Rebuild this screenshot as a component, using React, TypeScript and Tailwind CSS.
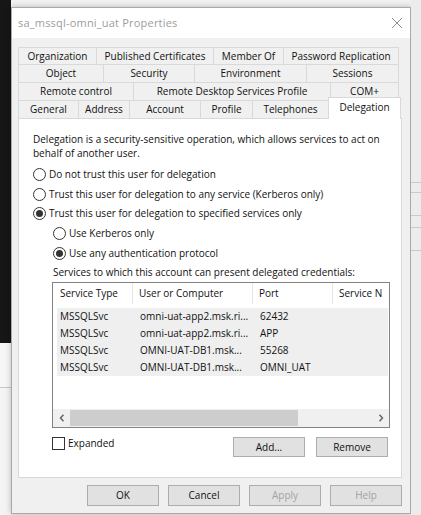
const ui = "font-['Open_Sans','Noto_Sans',sans-serif]";

const tabRows: { label: string; w: number }[][] = [
  [
    { label: "Organization", w: 78 },
    { label: "Published Certificates", w: 117 },
    { label: "Member Of", w: 70 },
    { label: "Password Replication", w: 116 },
  ],
  [
    { label: "Object", w: 85 },
    { label: "Security", w: 91 },
    { label: "Environment", w: 112 },
    { label: "Sessions", w: 93 },
  ],
  [
    { label: "Remote control", w: 115 },
    { label: "Remote Desktop Services Profile", w: 197 },
    { label: "COM+", w: 69 },
  ],
];

const lastRow = [
  { label: "General", w: 60 },
  { label: "Address", w: 51 },
  { label: "Account", w: 71 },
  { label: "Profile", w: 52 },
  { label: "Telephones", w: 76 },
];

const services = [
  { type: "MSSQLSvc", host: "omni-uat-app2.msk.ri...", port: "62432" },
  { type: "MSSQLSvc", host: "omni-uat-app2.msk.ri...", port: "APP" },
  { type: "MSSQLSvc", host: "OMNI-UAT-DB1.msk...", port: "55268" },
  { type: "MSSQLSvc", host: "OMNI-UAT-DB1.msk...", port: "OMNI_UAT" },
];

function Radio({ checked, label }: { checked?: boolean; label: string }) {
  return (
    <div className="flex h-[20px] items-center gap-[3px]">
      <span className="flex h-[13px] w-[13px] items-center justify-center rounded-full border border-[#333333] bg-white">
        {checked && <span className="h-[7px] w-[7px] rounded-full bg-[#333333]" />}
      </span>
      <span>{label}</span>
    </div>
  );
}

function Button({ label, disabled }: { label: string; disabled?: boolean }) {
  return (
    <div
      className={
        "flex h-[21px] w-[72px] items-center justify-center border border-[#adadad] bg-[#e1e1e1] " +
        (disabled ? "text-[#a3a3a3]" : "text-[#111111]")
      }
    >
      {label}
    </div>
  );
}

function Chevron({ dir }: { dir: "left" | "right" }) {
  return (
    <svg width="6" height="8" viewBox="0 0 6 8">
      <path
        d={dir === "left" ? "M4.5 0.8 L1.5 4 L4.5 7.2" : "M1.5 0.8 L4.5 4 L1.5 7.2"}
        fill="none"
        stroke="#606060"
        strokeWidth="1.4"
      />
    </svg>
  );
}

export default function App() {
  return (
    <div className={`flex h-[515px] w-[421px] overflow-hidden bg-[#f2f2f2] text-[10px] text-[#111111] ${ui}`}>
      {/* desktop behind, left */}
      <div className="flex w-[11px] flex-col">
        <div className="h-[343px] bg-[#161616]" />
        <div className="h-[45px] border-b border-[#c8c8c8] bg-[#f6f6f6]" />
        <div className="flex-1 bg-[#f4f4f4]" />
      </div>

      {/* dialog */}
      <div className="mt-[7px] flex h-[507px] w-[400px] flex-col border border-[#a9a9a9] bg-[#f0f0f0] shadow-[0_0_6px_rgba(0,0,0,0.25)]">
        <div className="flex h-[30px] items-center justify-between bg-white pl-[6px] pr-[7px]">
          <span className="text-[11px] tracking-[0.2px] text-[#9d9d9d]">sa_mssql-omni_uat Properties</span>
          <svg width="12" height="12" viewBox="0 0 12 12">
            <path d="M1 1 L11 11 M11 1 L1 11" stroke="#8f8f8f" strokeWidth="1" fill="none" />
          </svg>
        </div>

        <div className="flex flex-1 flex-col pl-[6px] pr-[8px] pt-[9px]">
          {/* tabs */}
          <div className="flex w-[384px] flex-col">
            {tabRows.map((row, i) => (
              <div key={i} className={"flex " + (i === 0 ? "h-[17px]" : "h-[18px]")}>
                {row.map((t, j) => (
                  <div
                    key={t.label}
                    style={{ width: t.w }}
                    className={
                      "flex items-center justify-center border-l border-t border-[#d9d9d9] bg-[#f0f0f0] " +
                      (j === row.length - 1 ? "border-r" : "")
                    }
                  >
                    {t.label}
                  </div>
                ))}
              </div>
            ))}
            <div className="flex h-[18px] items-end">
              {lastRow.map((t) => (
                <div
                  key={t.label}
                  style={{ width: t.w }}
                  className="flex h-[18px] items-center justify-center border-l border-t border-[#d9d9d9] bg-[#f0f0f0]"
                >
                  {t.label}
                </div>
              ))}
              <div className="relative z-10 -mb-px flex h-[22px] w-[73px] items-center justify-center border-x border-t border-[#d9d9d9] bg-white pb-[3px]">
                Delegation
              </div>
            </div>
          </div>

          {/* panel */}
          <div className="flex h-[360px] w-[384px] flex-col border border-[#d9d9d9] bg-white pl-[14px] pt-[13px]">
            <p className="w-[360px] leading-[14px]">
              Delegation is a security-sensitive operation, which allows services to act on behalf of another user.
            </p>
            <div className="mt-[4px] flex flex-col">
              <Radio label="Do not trust this user for delegation" />
              <Radio label="Trust this user for delegation to any service (Kerberos only)" />
              <div className="-mt-px">
                <Radio checked label="Trust this user for delegation to specified services only" />
              </div>
              <div className="flex flex-col pl-[20px]">
                <Radio label="Use Kerberos only" />
                <Radio checked label="Use any authentication protocol" />
                <div className="flex h-[18px] items-center">Services to which this account can present delegated credentials:</div>
              </div>
            </div>

            {/* list view */}
            <div className="ml-[19px] mt-[1px] flex h-[146px] w-[338px] flex-col border border-[#828282] bg-white">
              <div className="flex h-[21px] items-center">
                <div className="flex h-full w-[80px] items-center border-r border-[#e5e5e5] pl-[7px]">Service Type</div>
                <div className="flex h-full w-[120px] items-center border-r border-[#e5e5e5] pl-[6px]">User or Computer</div>
                <div className="flex h-full w-[80px] items-center border-r border-[#e5e5e5] pl-[6px]">Port</div>
                <div className="flex h-full flex-1 items-center whitespace-nowrap pl-[6px]">Service N</div>
              </div>
              <div className="ml-[4px] mt-[4px] flex w-[331px] flex-col bg-[#efefef]">
                {services.map((s, i) => (
                  <div key={i} className="flex h-[17px] items-center pl-[3px]">
                    <span className="w-[80px]">{s.type}</span>
                    <span className="w-[120px]">{s.host}</span>
                    <span>{s.port}</span>
                  </div>
                ))}
              </div>
              <div className="flex-1" />
              <div className="flex h-[18px] items-center bg-[#f0f0f0]">
                <div className="flex w-[17px] justify-center">
                  <Chevron dir="left" />
                </div>
                <div className="h-[16px] w-[228px] bg-[#cdcdcd]" />
                <div className="flex-1" />
                <div className="flex w-[17px] justify-center">
                  <Chevron dir="right" />
                </div>
              </div>
            </div>

            <div className="ml-[19px] mt-[9px] flex w-[338px] items-start pr-[2px]">
              <div className="flex h-[13px] items-center gap-[3px]">
                <span className="h-[13px] w-[13px] border border-[#333333] bg-white" />
                <span>Expanded</span>
              </div>
              <div className="ml-auto flex gap-[11px]">
                <div className="flex h-[20px] w-[72px] items-center justify-center border border-[#adadad] bg-[#e1e1e1]">Add...</div>
                <div className="flex h-[20px] w-[72px] items-center justify-center border border-[#adadad] bg-[#e1e1e1]">Remove</div>
              </div>
            </div>
          </div>

          {/* dialog buttons */}
          <div className="mt-[7px] flex justify-end gap-[9px]">
            <Button label="OK" />
            <Button label="Cancel" />
            <Button label="Apply" disabled />
            <Button label="Help" disabled />
          </div>
        </div>
      </div>

      {/* desktop behind, right */}
      <div className="flex w-[10px] flex-col bg-[#ececec]">
        <div className="h-[182px]" />
        <div className="h-[10px] border-t border-[#c9c9c9]" />
        <div className="h-[23px] border-t border-[#c9c9c9]" />
        <div className="h-[12px] border-t border-[#c9c9c9]" />
        <div className="h-[23px] border-t border-[#c9c9c9]" />
        <div className="border-t border-[#c9c9c9]" />
      </div>
    </div>
  );
}
